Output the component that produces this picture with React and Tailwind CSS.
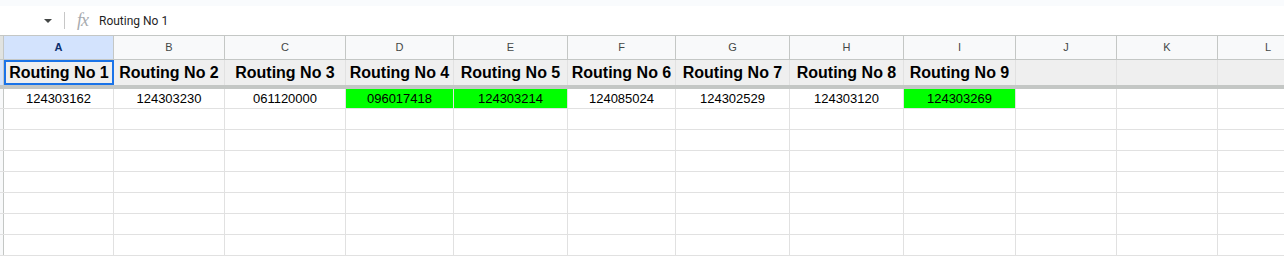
const COLS = [
  { key: 'A', w: 110 },
  { key: 'B', w: 111 },
  { key: 'C', w: 121 },
  { key: 'D', w: 108 },
  { key: 'E', w: 114 },
  { key: 'F', w: 108 },
  { key: 'G', w: 114 },
  { key: 'H', w: 114 },
  { key: 'I', w: 112 },
  { key: 'J', w: 101 },
  { key: 'K', w: 101 },
  { key: 'L', w: 101 },
]

const HEADERS = ['Routing No 1', 'Routing No 2', 'Routing No 3', 'Routing No 4', 'Routing No 5', 'Routing No 6', 'Routing No 7', 'Routing No 8', 'Routing No 9']
const VALUES = ['124303162', '124303230', '061120000', '096017418', '124303214', '124085024', '124302529', '124303120', '124303269']
const GREEN = [3, 4, 8]

export default function App() {
  return (
    <div className="w-[1284px] h-[257px] overflow-hidden bg-white" style={{ fontFamily: '"Liberation Sans", Arial, sans-serif' }}>
      <div className="h-[6px] bg-[#f9fbfd]" />

      {/* formula bar */}
      <div className="h-[29px] flex items-center">
        <div className="w-[64px] flex justify-end pr-[12px]">
          <svg width="8" height="4" viewBox="0 0 8 4"><path d="M0 0h8L4 4z" fill="#444746" /></svg>
        </div>
        <div className="w-px h-[17px] bg-[#c7c7c7]" />
        <span className="ml-[12px] text-[18px] italic text-[#a8abaf] tracking-[-1px]" style={{ fontFamily: '"Liberation Serif", serif' }}>fx</span>
        <span className="ml-[11px] text-[12px] text-[#1f1f1f]" style={{ fontFamily: 'Roboto, sans-serif' }}>Routing No 1</span>
      </div>

      {/* column letters */}
      <div className="flex h-[25px] border-t border-b border-[#c4c7c5] bg-[#f8f9fa]">
        <div className="w-[4px] shrink-0 bg-[#e1e3e1] border-r border-[#c4c7c5]" />
        {COLS.map((c, i) => (
          <div key={c.key} style={{ width: c.w }}
            className={'shrink-0 flex items-center justify-center text-[11px] border-r border-[#c4c7c5] ' + (i === 0 ? 'bg-[#d3e3fd] text-[#0b2f6e] font-bold' : 'text-[#444746]')}>
            {c.key}
          </div>
        ))}
      </div>

      {/* row 1 */}
      <div className="flex h-[25px] bg-[#efefef]">
        <div className="w-[4px] shrink-0 bg-[#d3e3fd] border-r border-[#c4c7c5]" />
        {COLS.map((c, i) => (
          <div key={c.key} style={{ width: c.w }}
            className={'shrink-0 flex items-center justify-center text-[16px] font-bold text-black whitespace-nowrap overflow-hidden ' +
              (i === 0 ? 'shadow-[inset_0_0_0_2px_#1a73e8] bg-[#efefef]' : 'border-r border-[#e1e1e1]')}>
            {HEADERS[i] || ''}
          </div>
        ))}
      </div>

      <div className="h-[4px] bg-[#c4c7c5]" />

      {/* row 2 */}
      <div className="flex h-[20px] border-b border-[#e1e1e1]">
        <div className="w-[4px] shrink-0 bg-[#f8f9fa] border-r border-[#c4c7c5]" />
        {COLS.map((c, i) => (
          <div key={c.key} style={{ width: c.w }}
            className={'shrink-0 flex items-center justify-center text-[13px] text-black border-r border-[#e1e1e1] ' + (GREEN.includes(i) ? 'bg-[#00ff00]' : '')}>
            {VALUES[i] || ''}
          </div>
        ))}
      </div>

      {Array.from({ length: 7 }).map((_, r) => (
        <div key={r} className="flex h-[21px] border-b border-[#e1e1e1]">
          <div className="w-[4px] shrink-0 bg-[#f8f9fa] border-r border-[#c4c7c5]" />
          {COLS.map((c) => (
            <div key={c.key} style={{ width: c.w }} className="shrink-0 border-r border-[#e1e1e1]" />
          ))}
        </div>
      ))}
    </div>
  )
}
